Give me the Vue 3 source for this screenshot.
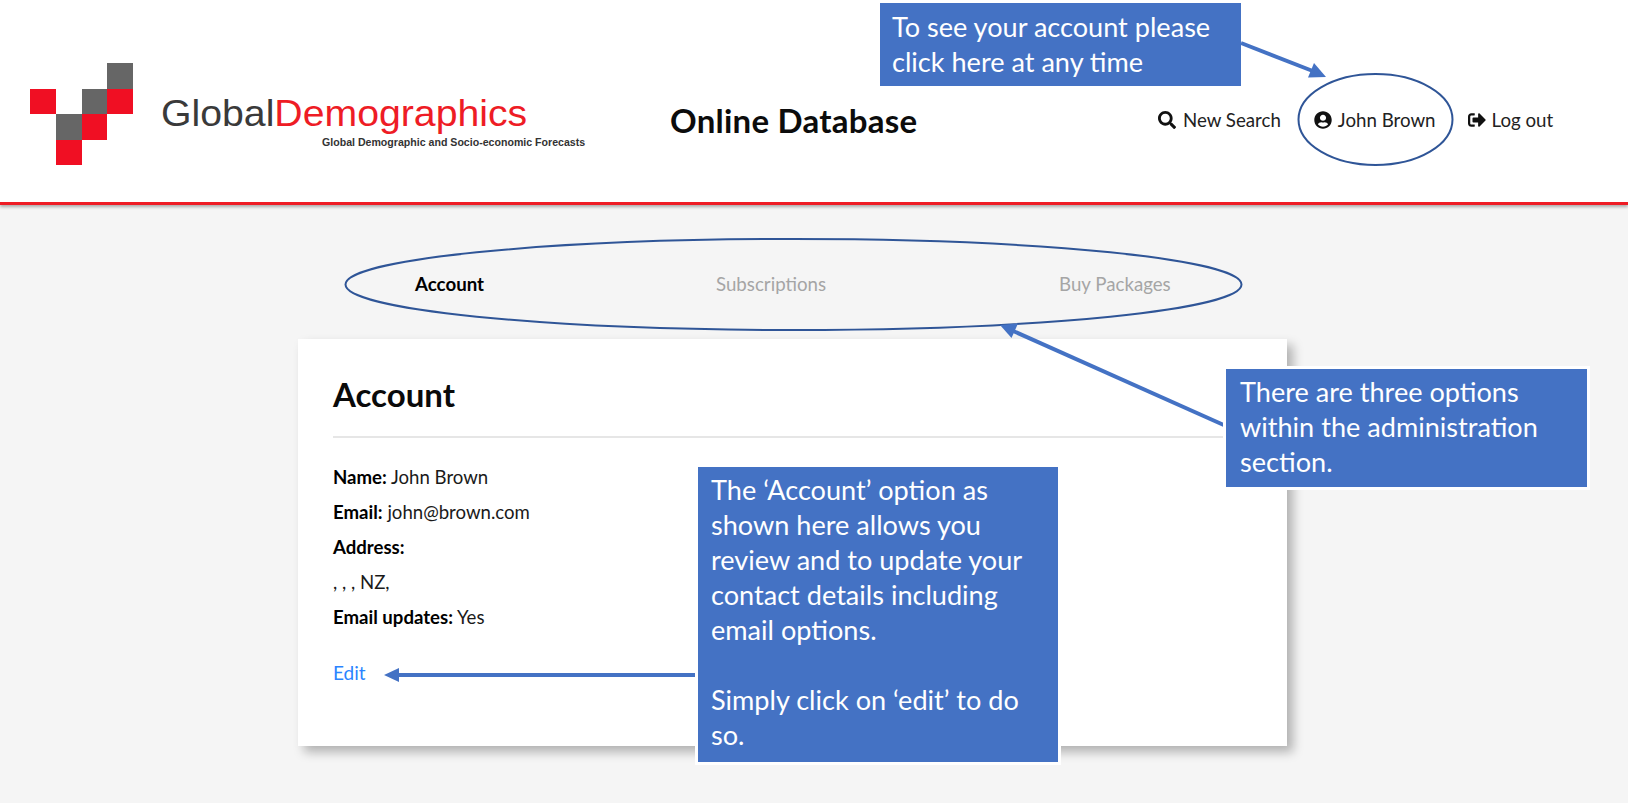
<template>
  <div class="page">
    <header class="top">
      <div class="logo">
        <div class="mark">
          <span v-for="(c, i) in markCells" :key="i" :class="c"></span>
        </div>
        <div class="brand">
          <div class="brand-name">Global<span>Demographics</span></div>
          <div class="brand-sub">Global Demographic and Socio-economic Forecasts</div>
        </div>
      </div>
      <div class="db-title">Online Database</div>
      <nav class="top-nav">
        <a class="nav-search">
          <svg viewBox="0 0 512 512"><path d="M505 442.7L405.3 343c-4.5-4.5-10.6-7-17-7H372c27.6-35.3 44-79.7 44-128C416 93.1 322.9 0 208 0S0 93.1 0 208s93.1 208 208 208c48.3 0 92.7-16.4 128-44v16.3c0 6.4 2.5 12.5 7 17l99.7 99.7c9.4 9.4 24.6 9.4 33.9 0l28.3-28.3c9.4-9.4 9.4-24.6.1-34zM208 336c-70.7 0-128-57.2-128-128 0-70.7 57.2-128 128-128 70.7 0 128 57.2 128 128 0 70.7-57.2 128-128 128z"/></svg>
          New Search
        </a>
        <a class="nav-user">
          <svg viewBox="0 0 496 512"><path d="M248 8C111 8 0 119 0 256s111 248 248 248 248-111 248-248S385 8 248 8zm0 96c48.6 0 88 39.4 88 88s-39.4 88-88 88-88-39.4-88-88 39.4-88 88-88zm0 344c-58.7 0-111.3-26.6-146.5-68.2 18.8-35.4 55.6-59.8 98.5-59.8 2.4 0 4.8.4 7.1 1.1 13 4.2 26.6 6.9 40.9 6.9 14.3 0 28-2.7 40.9-6.9 2.3-.7 4.7-1.1 7.1-1.1 42.9 0 79.7 24.4 98.5 59.8C359.3 421.4 306.7 448 248 448z"/></svg>
          John Brown
        </a>
        <a class="nav-out">
          <svg viewBox="0 0 512 512"><path d="M497 273L329 441c-15 15-41 4.5-41-17v-96H152c-13.3 0-24-10.7-24-24v-96c0-13.3 10.7-24 24-24h136V88c0-21.4 25.9-32 41-17l168 168c9.3 9.4 9.3 24.6 0 34zM192 436v-40c0-6.6-5.4-12-12-12H96c-17.7 0-32-14.3-32-32V160c0-17.7 14.3-32 32-32h84c6.6 0 12-5.4 12-12V76c0-6.6-5.4-12-12-12H96c-53 0-96 43-96 96v192c0 53 43 96 96 96h84c6.6 0 12-5.4 12-12z"/></svg>
          Log out
        </a>
      </nav>
    </header>

    <main class="content">
      <div class="tabs">
        <a v-for="t in tabs" :key="t.label" :class="{ active: t.active }" :style="{ width: t.width + 'px' }">{{ t.label }}</a>
      </div>
      <section class="card">
        <h2>Account</h2>
        <div class="details">
          <p v-for="(r, i) in rows" :key="i"><b v-if="r.label">{{ r.label }}</b> {{ r.value }}</p>
        </div>
        <a class="edit">Edit</a>
      </section>
    </main>

    <!-- annotations drawn on top of the screenshot -->
    <svg class="marks" viewBox="0 0 1628 803" width="1628" height="803">
      <ellipse cx="1375.5" cy="119.5" rx="77" ry="45.5" />
      <ellipse cx="793.5" cy="284.5" rx="448" ry="45.5" />
      <g class="arrow">
        <line x1="1241" y1="43" x2="1314" y2="71.5" />
        <polygon points="1326,77 1308,77.5 1314,63" />
        <line x1="1226" y1="426" x2="1012" y2="330.5" />
        <polygon points="1000,325 1018,323.5 1011.5,338" />
        <line x1="698" y1="675" x2="396" y2="675" />
        <polygon points="384,675 399,668 399,682" />
      </g>
    </svg>

    <div class="note note-a">To see your account please<br>click here at any time</div>
    <div class="note note-b">There are three options<br>within the administration<br>section.</div>
    <div class="note note-c">
      The ‘Account’ option as<br>shown here allows you<br>review and to update your<br>contact details including<br>email options.<br><br>Simply click on ‘edit’ to do<br>so.
    </div>
  </div>
</template>

<script setup>
const markCells = [
  '', '', '', 'g',
  'r', '', 'g', 'r',
  '', 'g', 'r', '',
  '', 'r', '', '',
]

const tabs = [
  { label: 'Account', active: true, width: 301 },
  { label: 'Subscriptions', width: 343 },
  { label: 'Buy Packages', width: 120 },
]

const rows = [
  { label: 'Name:', value: 'John Brown' },
  { label: 'Email:', value: 'john@brown.com' },
  { label: 'Address:', value: '' },
  { label: '', value: ', , , NZ,' },
  { label: 'Email updates:', value: 'Yes' },
]
</script>

<style>
html, body {
  margin: 0;
  background: #f5f5f5;
}
</style>

<style scoped>
.page {
  position: relative;
  height: 803px;
  overflow: hidden;
  background: #f5f5f5;
  font-family: Lato, "Liberation Sans", sans-serif;
  color: #111;
}
.top {
  display: flex;
  align-items: flex-start;
  height: 202px;
  background: #fff;
  border-bottom: 3px solid #ee1c25;
  box-shadow: 0 2px 3px rgba(0, 0, 0, 0.3);
  box-sizing: content-box;
}
.logo {
  display: flex;
  width: 670px;
  padding: 63px 0 0 30px;
  box-sizing: border-box;
  flex: none;
}
.mark {
  display: grid;
  grid-template-columns: repeat(4, 25.75px);
  grid-template-rows: repeat(4, 25.5px);
  flex: none;
}
.mark .g { background: #666; }
.mark .r { background: #f00f23; }
.brand {
  margin-left: 28px;
  padding-top: 31px;
}
.brand-name {
  font-family: "Liberation Sans", Arial, sans-serif;
  font-size: 37px;
  line-height: 40px;
  color: #3a3a3a;
  white-space: nowrap;
  transform: scaleX(1.06);
  transform-origin: left center;
}
.brand-name span { color: #ee1c25; }
.brand-sub {
  font-family: "Liberation Sans", Arial, sans-serif;
  font-size: 10.6px;
  font-weight: 700;
  line-height: 12px;
  margin: 2px 0 0 161px;
  color: #333;
  white-space: nowrap;
}
.db-title {
  flex: none;
  width: 488px;
  margin-top: 99px;
  font-size: 33px;
  line-height: 42px;
  font-weight: 700;
  letter-spacing: 0.25px;
  color: #0c0c0c;
  white-space: nowrap;
}
.top-nav {
  display: flex;
  margin-top: 108px;
  font-size: 18.7px;
  line-height: 24px;
  color: #222;
}
.top-nav a {
  display: flex;
  align-items: center;
  gap: 7px;
  white-space: nowrap;
}
.top-nav svg {
  width: 18px;
  height: 18px;
  fill: #111;
  flex: none;
}
.top-nav .nav-user { margin-left: 33px; gap: 6px; }
.top-nav .nav-out { margin-left: 32px; gap: 6px; }

.content {
  padding: 0 0 0 298px;
}
.tabs {
  display: flex;
  height: 134px;
  padding: 67px 0 0 117px;
  box-sizing: border-box;
  font-size: 18.7px;
  line-height: 24px;
  color: #a5a5a5;
}
.tabs a { white-space: nowrap; flex: none; }
.tabs .active {
  color: #000;
  font-weight: 700;
}
.card {
  width: 989px;
  height: 407px;
  padding: 0 35px;
  box-sizing: border-box;
  background: #fff;
  box-shadow: 6px 6px 10px rgba(0, 0, 0, 0.28);
}
.card h2 {
  margin: 0;
  padding: 34px 0 21px;
  font-size: 33px;
  line-height: 42px;
  font-weight: 700;
  color: #0a0a0a;
  border-bottom: 2px solid #e6e6e6;
}
.details { margin-top: 22px; }
.details p {
  margin: 0;
  font-size: 18.6px;
  line-height: 35px;
  color: #1a1a1a;
}
.details b { color: #000; }
.edit {
  display: block;
  margin-top: 26px;
  font-size: 19px;
  line-height: 24px;
  color: #2a84ff;
}

.marks {
  position: absolute;
  left: 0;
  top: 0;
  pointer-events: none;
}
.marks ellipse {
  fill: none;
  stroke: #2f5597;
  stroke-width: 2;
}
.arrow line {
  stroke: #4472c4;
  stroke-width: 4;
}
.arrow polygon { fill: #4472c4; }

.note {
  position: absolute;
  box-sizing: border-box;
  background: #4472c4;
  color: #fff;
  font-size: 27.1px;
  line-height: 35px;
  white-space: nowrap;
}
.note-a {
  left: 880px;
  top: 3px;
  width: 361px;
  height: 83px;
  padding: 6px 0 0 12px;
}
.note-b, .note-c {
  outline: 3px solid #fff;
}
.note-b {
  left: 1226px;
  top: 369px;
  width: 361px;
  height: 118px;
  padding: 5px 0 0 14px;
}
.note-c {
  left: 698px;
  top: 467px;
  width: 360px;
  height: 295px;
  padding: 5px 0 0 13px;
}
</style>
